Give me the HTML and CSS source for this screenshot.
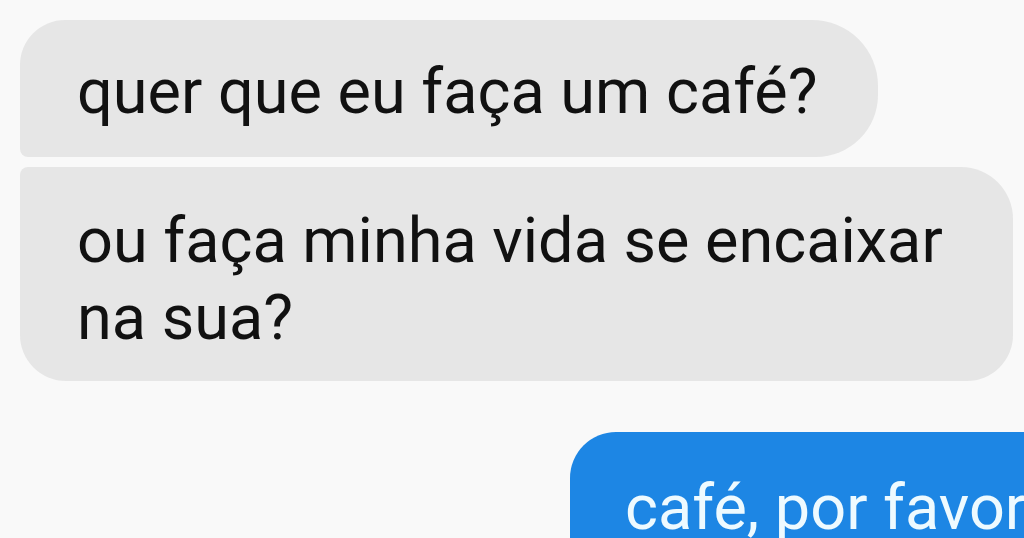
FILE: index.html
```html
<!DOCTYPE html>
<html lang="pt">
<head>
<meta charset="utf-8">
<link rel="stylesheet" href="styles.css">
</head>
<body>
<main class="chat">
  <div class="bubble in first">quer que eu faça um café?</div>
  <div class="bubble in second">ou faça minha vida se encaixar na sua?</div>
  <div class="bubble out">café, por favor</div>
</main>
</body>
</html>
```
FILE: styles.css
```css
html, body {
  margin: 0;
  padding: 0;
  width: 1024px;
  height: 538px;
  overflow: hidden;
  background: #f9f9f9;
}
.chat {
  display: flex;
  flex-direction: column;
  padding: 20px 0 0 20px;
  font-family: Roboto, "Noto Sans", sans-serif;
  font-size: 63px;
  line-height: 77px;
  color: #111;
}
.bubble {
  box-sizing: border-box;
  background: #e6e6e6;
  padding: 33px 40px 27px 57px;
}
.first {
  width: 858px;
  border-radius: 45px 66px 62px 8px;
}
.second {
  width: 993px;
  margin-top: 10px;
  padding-top: 35px;
  padding-bottom: 25px;
  border-radius: 8px 52px 46px 46px;
}
.out {
  width: 520px;
  margin-top: 51px;
  margin-left: 550px;
  padding: 37px 0 30px 55px;
  background: #1d86e4;
  color: #eefaff;
  white-space: nowrap;
  border-radius: 46px 0 0 0;
}
```
